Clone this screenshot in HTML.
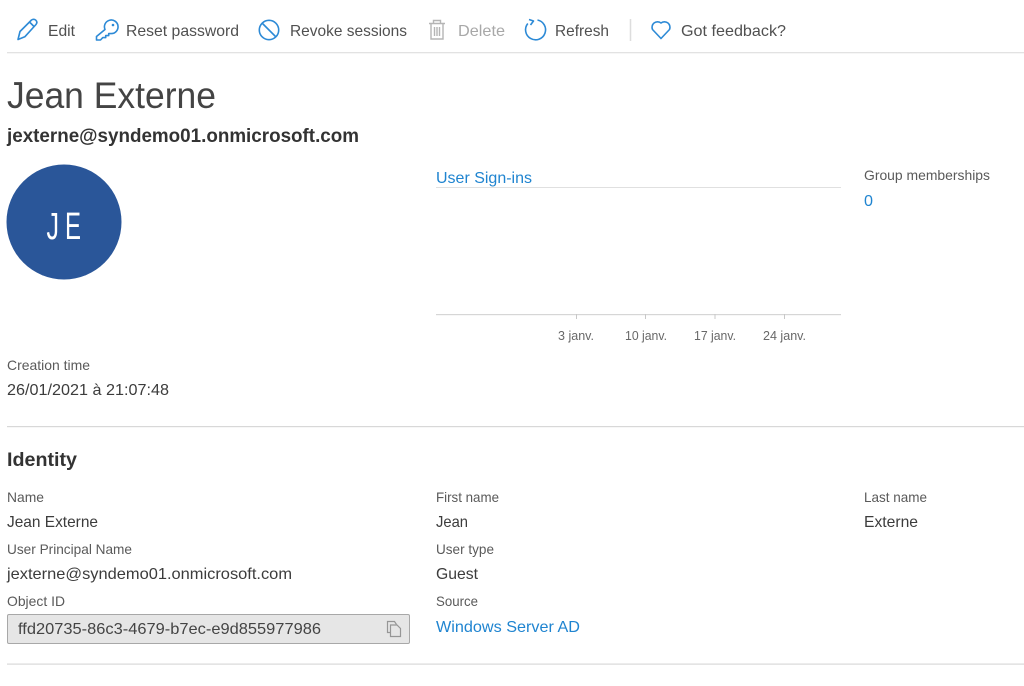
<!DOCTYPE html>
<html><head><meta charset="utf-8">
<style>
html,body{margin:0;padding:0;background:#fff;width:1024px;height:686px;overflow:hidden}
svg{display:block}
text{font-family:"Liberation Sans",sans-serif;fill:#4a4a4a;font-size:16px}
.t{font-size:16px;fill:#505050}
.l{font-size:14px;fill:#5a5a5a}
.v{font-size:16px;fill:#3c3c3c}
.a{fill:#1f84d0}
.x{font-size:12.5px;fill:#686868}
.i{fill:none;stroke:#2d8ad6;stroke-width:1.6;stroke-linejoin:round}
</style></head><body>
<svg width="1024" height="686" viewBox="0 0 1024 686" xmlns="http://www.w3.org/2000/svg">
<rect width="1024" height="686" fill="#fff"/>

<!-- toolbar icons -->
<path class="i" d="M18 39.5 L20 31.5 L31.5 20 Q33.8 18.5 35.8 20.2 Q37.8 22.3 36 24.5 L24.8 36.8 Z M29.5 22 L34 26.5"/>
<path class="i" d="M105 29.5 A6.8 6.8 0 1 1 111 33.6 L108.7 33.6 L108.7 35.6 L105.7 35.6 L105.7 37.6 L102.8 37.6 L100.5 40 H96.5 V36.5 Z"/>
<circle cx="113" cy="25" r="1.3" fill="#2d8ad6"/>
<circle class="i" cx="269" cy="30" r="9.7"/>
<path class="i" d="M262 23 L276 37"/>
<g fill="none" stroke="#b5b5b5" stroke-width="1.4">
<path d="M429 23.5 H445 M433.5 23.5 V20.5 H440.5 V23.5 M431 23.5 V39 H443 V23.5 M434.5 27 V36 M437 27 V36 M439.5 27 V36"/>
</g>
<path class="i" d="M537.5 20 A10 10 0 1 1 527.8 23.5"/>
<path class="i" d="M529 19.5 L533.5 21 L530.5 25"/>
<path d="M630.5 19 V41" stroke="#ddd" stroke-width="1.5"/>
<path class="i" d="M661 38.5 L652.5 29.5 A5.5 5.5 0 0 1 661 23 A5.5 5.5 0 0 1 669.5 29.5 Z"/>

<!-- toolbar text -->
<text class="t" x="48" y="36" textLength="27" lengthAdjust="spacingAndGlyphs">Edit</text>
<text class="t" x="126" y="36" textLength="113" lengthAdjust="spacingAndGlyphs">Reset password</text>
<text class="t" x="290" y="36" textLength="117" lengthAdjust="spacingAndGlyphs">Revoke sessions</text>
<text class="t" x="458" y="36" textLength="47" lengthAdjust="spacingAndGlyphs" style="fill:#a8a8a8">Delete</text>
<text class="t" x="555" y="36" textLength="54" lengthAdjust="spacingAndGlyphs">Refresh</text>
<text class="t" x="681" y="36" textLength="105" lengthAdjust="spacingAndGlyphs">Got feedback?</text>

<rect x="7" y="52" width="1017" height="1.3" fill="#e2e2e2"/>

<!-- header -->
<text x="7" y="108" textLength="209" lengthAdjust="spacingAndGlyphs" style="font-size:37px;fill:#444">Jean Externe</text>
<text x="7" y="142" textLength="352" lengthAdjust="spacingAndGlyphs" style="font-size:19px;font-weight:bold;fill:#333">jexterne@syndemo01.onmicrosoft.com</text>

<circle cx="64" cy="222" r="57.5" fill="#2a5699"/>
<text x="46.5" y="239" textLength="12.5" lengthAdjust="spacingAndGlyphs" style="font-size:38px;fill:#fff">J</text>
<text x="65" y="239" textLength="16" lengthAdjust="spacingAndGlyphs" style="font-size:38px;fill:#fff">E</text>

<!-- chart -->
<text class="v a" x="436" y="183" textLength="96" lengthAdjust="spacingAndGlyphs">User Sign-ins</text>
<rect x="436" y="187" width="405" height="1" fill="#e0e0e0"/>
<rect x="436" y="314" width="405" height="1.2" fill="#d6d6d6"/>
<path d="M576.5 314 V319 M645.5 314 V319 M715 314 V319 M784.5 314 V319" stroke="#c8c8c8" stroke-width="1"/>
<text class="x" x="558" y="340" textLength="36" lengthAdjust="spacingAndGlyphs">3 janv.</text>
<text class="x" x="625" y="340" textLength="42" lengthAdjust="spacingAndGlyphs">10 janv.</text>
<text class="x" x="694" y="340" textLength="42" lengthAdjust="spacingAndGlyphs">17 janv.</text>
<text class="x" x="763" y="340" textLength="43" lengthAdjust="spacingAndGlyphs">24 janv.</text>

<text class="l" x="864" y="180" textLength="126" lengthAdjust="spacingAndGlyphs">Group memberships</text>
<text class="v a" x="864" y="206" textLength="9" lengthAdjust="spacingAndGlyphs">0</text>

<text class="l" x="7" y="370" textLength="83" lengthAdjust="spacingAndGlyphs">Creation time</text>
<text class="v" x="7" y="395" textLength="162" lengthAdjust="spacingAndGlyphs">26/01/2021 à 21:07:48</text>

<rect x="7" y="426" width="1017" height="1.2" fill="#d8d8d8"/>

<!-- identity -->
<text x="7" y="466" textLength="70" lengthAdjust="spacingAndGlyphs" style="font-size:19px;font-weight:bold;fill:#333">Identity</text>

<text class="l" x="7" y="502" textLength="37" lengthAdjust="spacingAndGlyphs">Name</text>
<text class="v" x="7" y="527" textLength="91" lengthAdjust="spacingAndGlyphs">Jean Externe</text>
<text class="l" x="7" y="554" textLength="125" lengthAdjust="spacingAndGlyphs">User Principal Name</text>
<text class="v" x="7" y="579" textLength="285" lengthAdjust="spacingAndGlyphs">jexterne@syndemo01.onmicrosoft.com</text>
<text class="l" x="7" y="606" textLength="58" lengthAdjust="spacingAndGlyphs">Object ID</text>

<rect x="7.5" y="614.5" width="402" height="29" rx="1.5" fill="#e6e6e6" stroke="#a8a8a8"/>
<text class="v" x="18" y="634" textLength="303" lengthAdjust="spacingAndGlyphs" style="fill:#444">ffd20735-86c3-4679-b7ec-e9d855977986</text>
<g fill="none" stroke="#969696" stroke-width="1.2">
<path d="M390 632.5 H387.5 V621.5 H394.5 L396.5 624.5"/>
<path d="M390.5 625 H397 L400.5 628.5 V636.5 H390.5 Z"/>
</g>

<text class="l" x="436" y="502" textLength="63" lengthAdjust="spacingAndGlyphs">First name</text>
<text class="v" x="436" y="527" textLength="32" lengthAdjust="spacingAndGlyphs">Jean</text>
<text class="l" x="436" y="554" textLength="58" lengthAdjust="spacingAndGlyphs">User type</text>
<text class="v" x="436" y="579" textLength="42" lengthAdjust="spacingAndGlyphs">Guest</text>
<text class="l" x="436" y="606" textLength="42" lengthAdjust="spacingAndGlyphs">Source</text>
<text class="v a" x="436" y="632" textLength="144" lengthAdjust="spacingAndGlyphs">Windows Server AD</text>

<text class="l" x="864" y="502" textLength="63" lengthAdjust="spacingAndGlyphs">Last name</text>
<text class="v" x="864" y="527" textLength="54" lengthAdjust="spacingAndGlyphs">Externe</text>

<rect x="7" y="663.5" width="1017" height="1.2" fill="#d8d8d8"/>
</svg>
</body></html>
